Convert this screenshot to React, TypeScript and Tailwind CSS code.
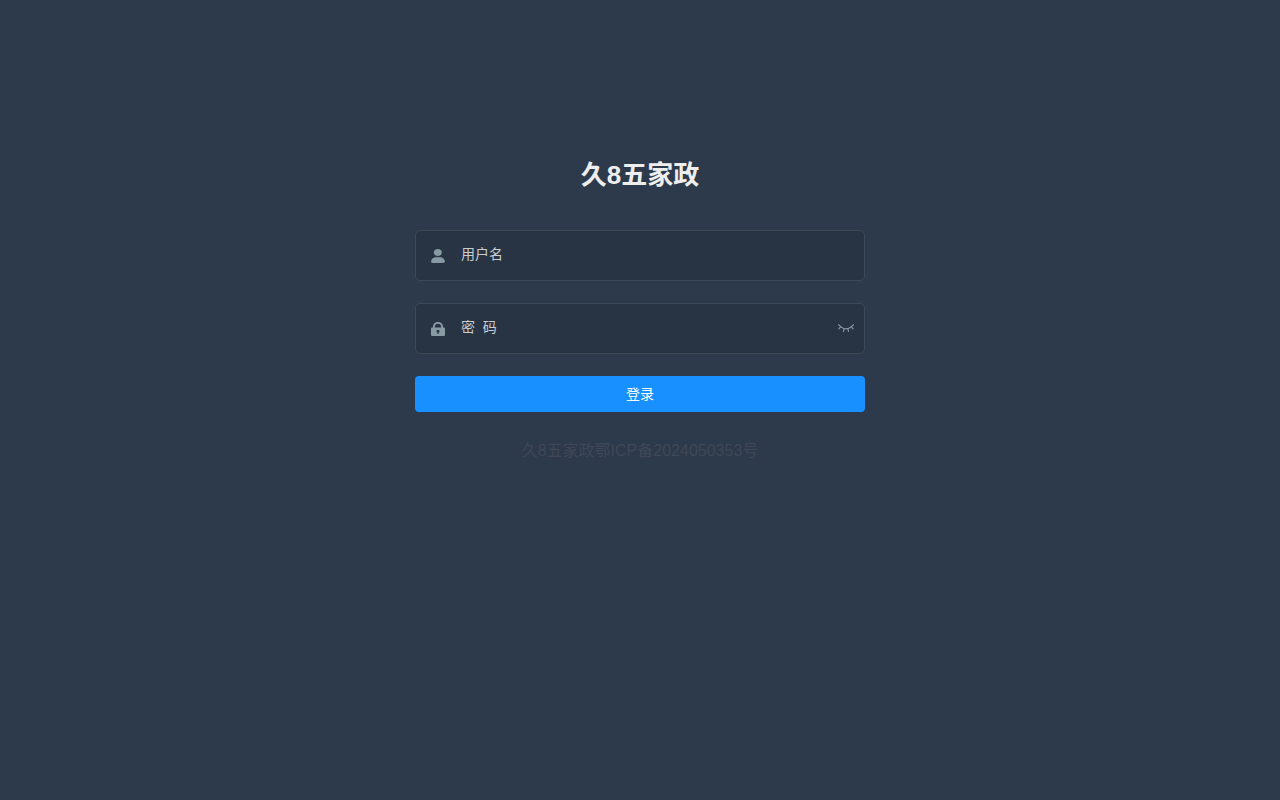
import { useState } from 'react';

const UserIcon = () => (
  <svg viewBox="0 0 130 130" className="size-3.5" fill="currentColor" aria-hidden="true">
    <path
      stroke="#979797"
      d="M63.444 64.996c20.633 0 37.359-14.308 37.359-31.953 0-17.649-16.726-31.952-37.359-31.952-20.631 0-37.36 14.303-37.36 31.952 0 17.645 16.729 31.953 37.36 31.953zM80.57 75.65H49.434c-26.652 0-48.26 18.477-48.26 41.27v2.664c0 9.316 21.608 9.325 48.26 9.325H80.57c26.649 0 48.256-.344 48.256-9.325v-2.663c0-22.794-21.605-41.271-48.256-41.271z"
    />
  </svg>
);

const LockIcon = () => (
  <svg viewBox="0 0 128 128" className="size-3.5" fill="currentColor" aria-hidden="true">
    <path
      fillRule="evenodd"
      d="M12 50h6v-6C18 19 38 1 64 1s46 18 46 43v6h6c7 0 12 5 12 11v55c0 7-5 12-12 12H12c-7 0-12-5-12-12V61c0-6 5-11 12-11zM35 50h58v-6c0-15-12-27-29-27S35 29 35 44zM71 94v9c0 4-3 7-7 7s-7-3-7-7v-9c-4-2-7-6-7-10 0-7 6-12 14-12s14 5 14 12c0 4-3 8-7 10z"
    />
  </svg>
);

const EyeClosedIcon = () => (
  <svg viewBox="0 0 128 64" className="h-2 w-4" fill="currentColor" aria-hidden="true">
    <path d="M127.072 7.994c1.37-2.208.914-5.152-.914-6.87-2.056-1.717-4.797-1.226-6.396.982-.229.245-25.586 32.382-55.74 32.382-29.24 0-55.74-32.382-55.968-32.627-1.6-1.963-4.57-2.208-6.397-.49C-.17 3.086-.399 6.275 1.2 8.238c.457.736 5.94 7.36 14.62 14.72L4.17 35.96c-1.828 1.963-1.6 5.152.228 6.87.457.98 1.6 1.471 2.742 1.471s2.284-.49 3.198-1.472l12.564-13.983c5.94 4.416 13.021 8.587 20.788 11.53l-4.797 17.418c-.685 2.699.686 5.397 3.198 6.133h1.37c2.057 0 3.884-1.472 4.341-3.68L52.6 42.83c3.655.736 7.538 1.227 11.422 1.227 3.883 0 7.767-.49 11.422-1.227l4.797 17.173c.457 2.208 2.513 3.68 4.34 3.68.457 0 .914 0 1.143-.246 2.513-.736 3.883-3.434 3.198-6.133l-4.797-17.172c7.767-2.944 14.848-7.114 20.788-11.53l12.336 13.738c.913.981 2.056 1.472 3.198 1.472s2.284-.49 3.198-1.472c1.828-1.963 1.828-4.906.228-6.87l-11.65-13.001c9.366-7.36 14.849-14.474 14.849-14.474z" />
  </svg>
);

const fieldClass =
  'flex h-[51px] items-center rounded-[5px] border border-[#3e4957] bg-[#283443] pl-[15px] pr-2.5 text-[#889aa4]';
const inputClass =
  'h-full min-w-0 flex-1 bg-transparent pb-1 pl-4 text-sm text-white outline-none placeholder:text-[#c9ccd0]';

export default function App() {
  const [username, setUsername] = useState('');
  const [password, setPassword] = useState('');
  const [showPassword, setShowPassword] = useState(false);

  return (
    <main className={'min-h-screen bg-[#2d3a4b] font-["Liberation_Sans","Noto_Sans_CJK_SC",sans-serif]'}>
      <form
        className="mx-auto flex max-w-[520px] flex-col px-[35px] pt-40"
        onSubmit={e => e.preventDefault()}
      >
        <h1 className="mb-10 text-center text-[26px] leading-[30px] font-bold text-[#eee]">久8五家政</h1>

        <div className="flex flex-col gap-[22px]">
          <div className={fieldClass}>
            <label htmlFor="username">
              <UserIcon />
            </label>
            <input
              id="username"
              aria-label="用户名"
              placeholder="用户名"
              autoComplete="off"
              className={inputClass}
              value={username}
              onChange={e => setUsername(e.target.value)}
            />
          </div>

          <div className={fieldClass}>
            <label htmlFor="password">
              <LockIcon />
            </label>
            <input
              id="password"
              type={showPassword ? 'text' : 'password'}
              aria-label="密码"
              placeholder={'密\u00a0\u00a0码'}
              autoComplete="off"
              className={inputClass}
              value={password}
              onChange={e => setPassword(e.target.value)}
            />
            <button
              type="button"
              aria-label="显示密码"
              className="cursor-pointer pb-0.5"
              onClick={() => setShowPassword(!showPassword)}
            >
              <EyeClosedIcon />
            </button>
          </div>

          <button type="submit" className="h-9 cursor-pointer rounded bg-[#1890ff] text-sm text-white">
            登录
          </button>
        </div>

        <p className="mt-[27px] text-center text-base text-[#404756]">久8五家政鄂ICP备2024050353号</p>
      </form>
    </main>
  );
}
